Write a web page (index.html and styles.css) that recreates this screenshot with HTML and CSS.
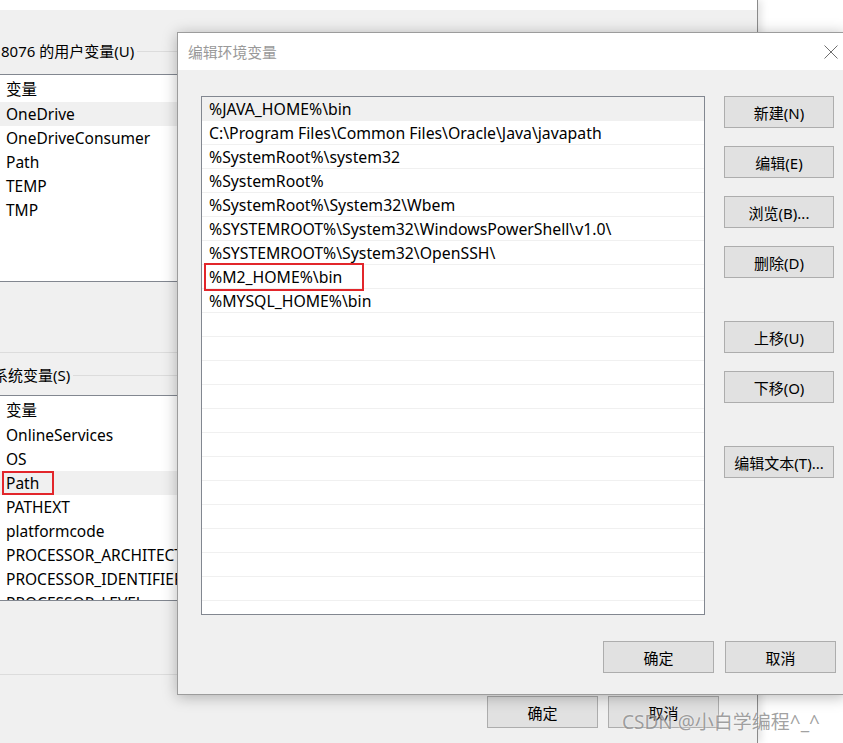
FILE: index.html
```html
<!DOCTYPE html>
<html lang="zh-CN">
<head>
<meta charset="utf-8">
<title>编辑环境变量</title>
<link rel="stylesheet" href="styles.css">
</head>
<body>
<div class="desktop">
  <div class="bgwin">
    <div class="tabstrip"></div>
    <div class="group-label user-label"><span>8076 的用户变量(U)</span><i class="gline"></i></div>
    <div class="varlist user-list">
      <div class="vrow head">变量</div>
      <div class="vrow sel">OneDrive</div>
      <div class="vrow">OneDriveConsumer</div>
      <div class="vrow">Path</div>
      <div class="vrow">TEMP</div>
      <div class="vrow">TMP</div>
    </div>
    <div class="hsep sep1"></div>
    <div class="group-label sys-label"><span>系统变量(S)</span><i class="gline"></i></div>
    <div class="varlist sys-list">
      <div class="vrow head">变量</div>
      <div class="vrow">OnlineServices</div>
      <div class="vrow">OS</div>
      <div class="vrow sel"><span class="mark path-mark"></span>Path</div>
      <div class="vrow">PATHEXT</div>
      <div class="vrow">platformcode</div>
      <div class="vrow">PROCESSOR_ARCHITECTURE</div>
      <div class="vrow">PROCESSOR_IDENTIFIER</div>
      <div class="vrow">PROCESSOR_LEVEL</div>
    </div>
    <div class="hsep sep2"></div>
    <div class="bg-footer">
      <button class="btn">确定</button>
      <button class="btn">取消</button>
    </div>
  </div>

  <div class="dialog">
    <div class="titlebar">
      <span class="title">编辑环境变量</span>
      <svg class="close" width="14" height="14" viewBox="0 0 14 14"><path d="M0.5 0.5 L13.5 13.5 M13.5 0.5 L0.5 13.5" stroke="#6f6f6f" stroke-width="1" fill="none"/></svg>
    </div>
    <div class="dbody">
      <div class="pathlist">
        <div class="prow sel">%JAVA_HOME%\bin</div>
        <div class="prow">C:\Program Files\Common Files\Oracle\Java\javapath</div>
        <div class="prow">%SystemRoot%\system32</div>
        <div class="prow">%SystemRoot%</div>
        <div class="prow">%SystemRoot%\System32\Wbem</div>
        <div class="prow">%SYSTEMROOT%\System32\WindowsPowerShell\v1.0\</div>
        <div class="prow">%SYSTEMROOT%\System32\OpenSSH\</div>
        <div class="prow"><span class="mark m2-mark"></span>%M2_HOME%\bin</div>
        <div class="prow">%MYSQL_HOME%\bin</div>
        <div class="prow"></div><div class="prow"></div><div class="prow"></div>
        <div class="prow"></div><div class="prow"></div><div class="prow"></div>
        <div class="prow"></div><div class="prow"></div><div class="prow"></div>
        <div class="prow"></div><div class="prow"></div><div class="prow"></div>
        <div class="prow"></div>
      </div>
      <div class="sidebtns">
        <button class="btn">新建(N)</button>
        <button class="btn">编辑(E)</button>
        <button class="btn">浏览(B)...</button>
        <button class="btn">删除(D)</button>
        <button class="btn gap">上移(U)</button>
        <button class="btn">下移(O)</button>
        <button class="btn gap">编辑文本(T)...</button>
      </div>
    </div>
    <div class="dfooter">
      <button class="btn">确定</button>
      <button class="btn">取消</button>
    </div>
  </div>

  <div class="watermark">CSDN @小白学编程^_^</div>
</div>
</body>
</html>
```

FILE: styles.css
```css
* { box-sizing: border-box; }
html, body { margin: 0; padding: 0; }
body {
  width: 843px;
  height: 743px;
  overflow: hidden;
  background: #ffffff;
  font-family: "Noto Sans", "Noto Sans CJK SC", sans-serif;
  font-size: 15.5px;
  color: #000;
}
.desktop {
  position: relative;
  width: 843px;
  height: 743px;
  overflow: hidden;
  background: #ffffff;
}
.bgwin {
  width: 758px;
  height: 743px;
  background: #f0f0f0;
  border-right: 1px solid #8a8a8a;
  box-shadow: 3px 0 8px rgba(0,0,0,0.12);
  display: flex;
  flex-direction: column;
  overflow: hidden;
}
.tabstrip { height: 10px; background: #ffffff; flex: none; }
.group-label {
  height: 20px;
  display: flex;
  align-items: center;
  flex: none;
  white-space: nowrap;
  line-height: 20px;
  font-size: 15px;
}
.group-label .gline { flex: 1; height: 1px; background: #dcdcdc; margin-left: 3px; }
.user-label { margin-top: 31px; padding-left: 1px; }
.sys-label { margin-top: 12px; margin-left: -7px; }
.varlist {
  flex: none;
  background: #ffffff;
  border-top: 1px solid #828790;
  border-bottom: 1px solid #828790;
  overflow: hidden;
  margin-right: 20px;
}
.user-list { margin-top: 13px; height: 208px; }
.sys-list { margin-top: 10px; height: 206px; }
.vrow {
  position: relative;
  height: 24px;
  line-height: 24px;
  padding-left: 6px;
  white-space: nowrap;
}
.vrow.head { height: 27px; line-height: 28px; }
.vrow.sel { background: #f0f0f0; }
.hsep { height: 1px; background: #dcdcdc; flex: none; }
.sep1 { margin-top: 70px; }
.sep2 { margin-top: 73px; }
.bg-footer {
  margin-top: 21px;
  display: flex;
  gap: 10px;
  padding-left: 487px;
}
.btn {
  width: 111px;
  height: 32px;
  background: #e1e1e1;
  border: 1px solid #adadad;
  font-family: "Noto Sans", "Noto Sans CJK SC", sans-serif;
  font-size: 15px;
  color: #000;
  padding: 0;
  margin: 0;
  flex: none;
}
.mark {
  position: absolute;
  border: 2px solid #e2262b;
  pointer-events: none;
}
.path-mark { left: 2px; top: 0; width: 52px; height: 24px; }

.dialog {
  position: absolute;
  left: 177px;
  top: 32px;
  width: 669px;
  height: 663px;
  background: #f0f0f0;
  border: 1px solid #9c9c9c;
  box-shadow: 0 2px 14px rgba(0,0,0,0.28);
  display: flex;
  flex-direction: column;
}
.titlebar {
  height: 37px;
  background: #ffffff;
  display: flex;
  align-items: center;
  padding-left: 10px;
  flex: none;
}
.title { color: #999999; font-size: 14.8px; font-family: "Noto Sans CJK SC", sans-serif; }
.close { margin-left: auto; margin-right: 7px; }
.dbody {
  display: flex;
  padding-top: 26px;
  padding-left: 23px;
  gap: 19px;
  flex: none;
}
.pathlist {
  width: 504px;
  height: 519px;
  background: #ffffff;
  border: 1px solid #828790;
  overflow: hidden;
  flex: none;
  font-size: 15.8px;
}
.prow {
  position: relative;
  height: 24px;
  line-height: 24px;
  border-bottom: 1px solid #f0f0f0;
  padding-left: 7px;
  white-space: nowrap;
}
.prow.sel { background: #f0f0f0; }
.m2-mark { left: 2px; top: -2px; width: 160px; height: 28px; }
.sidebtns { display: flex; flex-direction: column; gap: 18px; width: 110px; }
.sidebtns .btn { width: 110px; }
.sidebtns .btn.gap { margin-top: 25px; }
.dfooter {
  display: flex;
  justify-content: flex-end;
  gap: 11px;
  margin-top: 26px;
  padding-right: 9px;
}
.watermark {
  position: absolute;
  left: 622px;
  top: 707px;
  font-family: "Noto Sans", "Noto Sans CJK SC", sans-serif;
  font-size: 19px;
  color: rgba(120,120,120,0.7);
  text-shadow: 0 0 2px rgba(255,255,255,0.8);
  white-space: nowrap;
}
```
